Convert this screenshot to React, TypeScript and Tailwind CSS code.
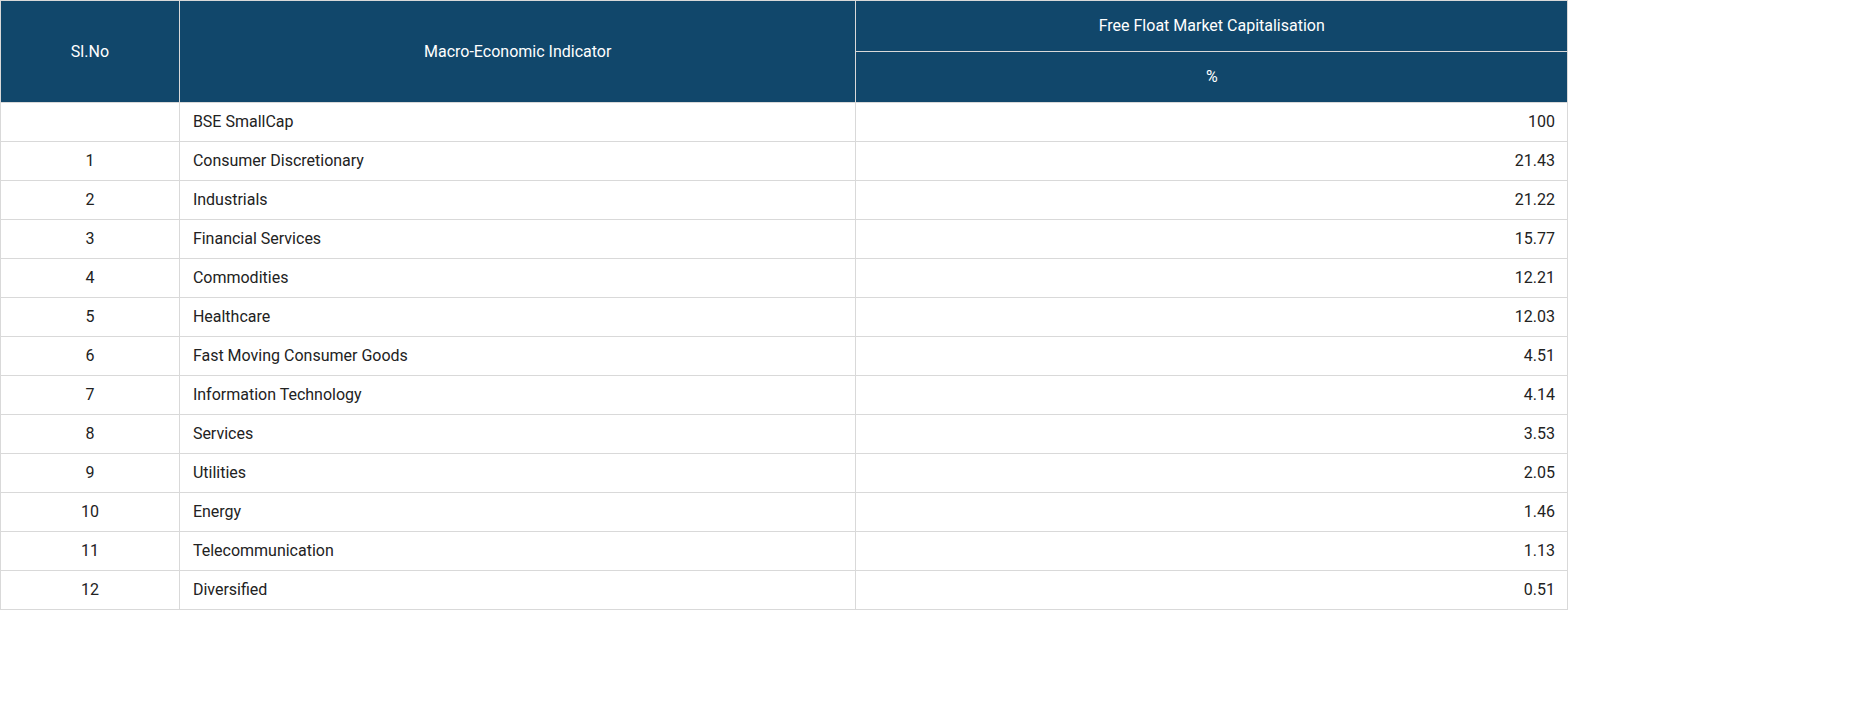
const rows: [string, string, string][] = [
  ["", "BSE SmallCap", "100"],
  ["1", "Consumer Discretionary", "21.43"],
  ["2", "Industrials", "21.22"],
  ["3", "Financial Services", "15.77"],
  ["4", "Commodities", "12.21"],
  ["5", "Healthcare", "12.03"],
  ["6", "Fast Moving Consumer Goods", "4.51"],
  ["7", "Information Technology", "4.14"],
  ["8", "Services", "3.53"],
  ["9", "Utilities", "2.05"],
  ["10", "Energy", "1.46"],
  ["11", "Telecommunication", "1.13"],
  ["12", "Diversified", "0.51"],
];

export default function App() {
  return (
    <div className="bg-white" style={{ fontFamily: "Roboto, 'Liberation Sans', sans-serif" }}>
      <table className="w-[1568px] border-collapse text-[16px] text-[#222]">
        <colgroup>
          <col className="w-[179px]" />
          <col className="w-[677px]" />
          <col className="w-[712px]" />
        </colgroup>
        <thead className="bg-[#11476b] text-white">
          <tr className="h-[51px]">
            <th rowSpan={2} className="border border-[#d9d9d9] font-normal text-center">Sl.No</th>
            <th rowSpan={2} className="border border-[#d9d9d9] font-normal text-center">Macro-Economic Indicator</th>
            <th className="border border-[#d9d9d9] font-normal text-center">Free Float Market Capitalisation</th>
          </tr>
          <tr className="h-[51px]">
            <th className="border border-[#d9d9d9] font-normal text-center">%</th>
          </tr>
        </thead>
        <tbody>
          {rows.map((r, i) => (
            <tr key={i} className="h-[39px]">
              <td className="border border-[#d9d9d9] text-center">{r[0]}</td>
              <td className="border border-[#d9d9d9] px-[13px]">{r[1]}</td>
              <td className="border border-[#d9d9d9] px-[12px] text-right">{r[2]}</td>
            </tr>
          ))}
        </tbody>
      </table>
    </div>
  );
}
